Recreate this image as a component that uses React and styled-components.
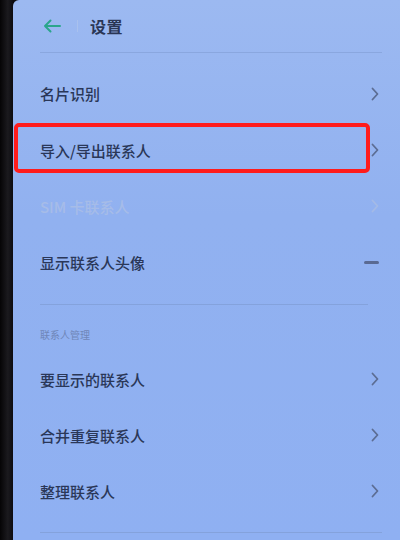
import React from 'react';
import styled, { createGlobalStyle } from 'styled-components';

const Global = createGlobalStyle`
  html, body {
    margin: 0;
    padding: 0;
    background: #0b0a0c;
  }
  body {
    font-family: "Noto Sans CJK SC", "Noto Sans", sans-serif;
  }
`;

const Phone = styled.div`
  display: flex;
  width: 400px;
  height: 540px;
  overflow: hidden;
  background: #0b0a0c;
`;

const Bezel = styled.div`
  width: 13px;
  flex: none;
  background: linear-gradient(90deg, #050405 0%, #1b1a1e 60%, #0d0c10 100%);
`;

const Screen = styled.div`
  flex: 1;
  display: flex;
  flex-direction: column;
  background: linear-gradient(180deg, #9cb9f1 0%, #91b1f0 40%, #8fb0f2 100%);
  border-top-left-radius: 6px;
`;

const Header = styled.div`
  display: flex;
  align-items: center;
  height: 52px;
  margin: 0 18px 0 27px;
  border-bottom: 1px solid #8aa7df;
`;

const Back = styled.span`
  display: flex;
  align-items: center;
  width: 20px;
  margin-left: 3px;
`;

const Sep = styled.span`
  width: 1px;
  height: 12px;
  margin: 0 12px 0 14px;
  background: #a9c1ee;
`;

const Title = styled.h1`
  margin: 0;
  font-size: 16px;
  font-weight: 700;
  color: #2a3655;
  letter-spacing: 0.5px;
`;

const List = styled.div`
  display: flex;
  flex-direction: column;
  padding-top: 12px;
`;

const Row = styled.div`
  position: relative;
  display: flex;
  align-items: center;
  justify-content: space-between;
  height: ${p => p.$h || 56}px;
  padding: 0 21px 0 27px;
  font-size: 15px;
  font-weight: 500;
  color: ${p => (p.$disabled ? '#a6bce8' : '#2a3758')};
`;

const Highlight = styled.div`
  position: absolute;
  left: 1px;
  top: 1px;
  width: 348px;
  height: 42px;
  border: 4px solid #ff1c1c;
  border-radius: 5px;
`;

const Divider = styled.div`
  height: 1px;
  margin: ${p => p.$m || '15px 32px 0 27px'};
  background: #84a2dc;
`;

const Section = styled.div`
  height: 46px;
  padding: 22px 0 0 27px;
  box-sizing: border-box;
  font-size: 10px;
  color: #6f86b8;
`;

const Dash = styled.span`
  width: 15px;
  height: 3px;
  border-radius: 2px;
  background: #5a6a92;
`;

const Chevron = ({ color = '#5c6d93' }) => (
  <svg width="8" height="14" viewBox="0 0 8 14">
    <path d="M1.5 1.5 L6.5 7 L1.5 12.5" fill="none" stroke={color} strokeWidth="1.8" strokeLinecap="round" strokeLinejoin="round" />
  </svg>
);

const Arrow = () => (
  <svg width="18" height="14" viewBox="0 0 18 14">
    <path d="M17 7 H2 M7.5 1.5 L2 7 L7.5 12.5" fill="none" stroke="#2ba58c" strokeWidth="2" strokeLinecap="round" strokeLinejoin="round" />
  </svg>
);

export default function App() {
  return (
    <>
      <Global />
      <Phone>
        <Bezel />
        <Screen>
          <Header>
            <Back><Arrow /></Back>
            <Sep />
            <Title>设置</Title>
          </Header>
          <List>
            <Row $h={57}>名片识别<Chevron /></Row>
            <Row>
              导入/导出联系人
              <Chevron />
              <Highlight />
            </Row>
            <Row $disabled>SIM 卡联系人<Chevron color="#a4bae6" /></Row>
            <Row>显示联系人头像<Dash /></Row>
          </List>
          <Divider $m="14px 32px 0 27px" />
          <Section>联系人管理</Section>
          <Row>要显示的联系人<Chevron /></Row>
          <Row>合并重复联系人<Chevron /></Row>
          <Row>整理联系人<Chevron /></Row>
          <Divider $m="13px 18px 0 27px" />
        </Screen>
      </Phone>
    </>
  );
}
